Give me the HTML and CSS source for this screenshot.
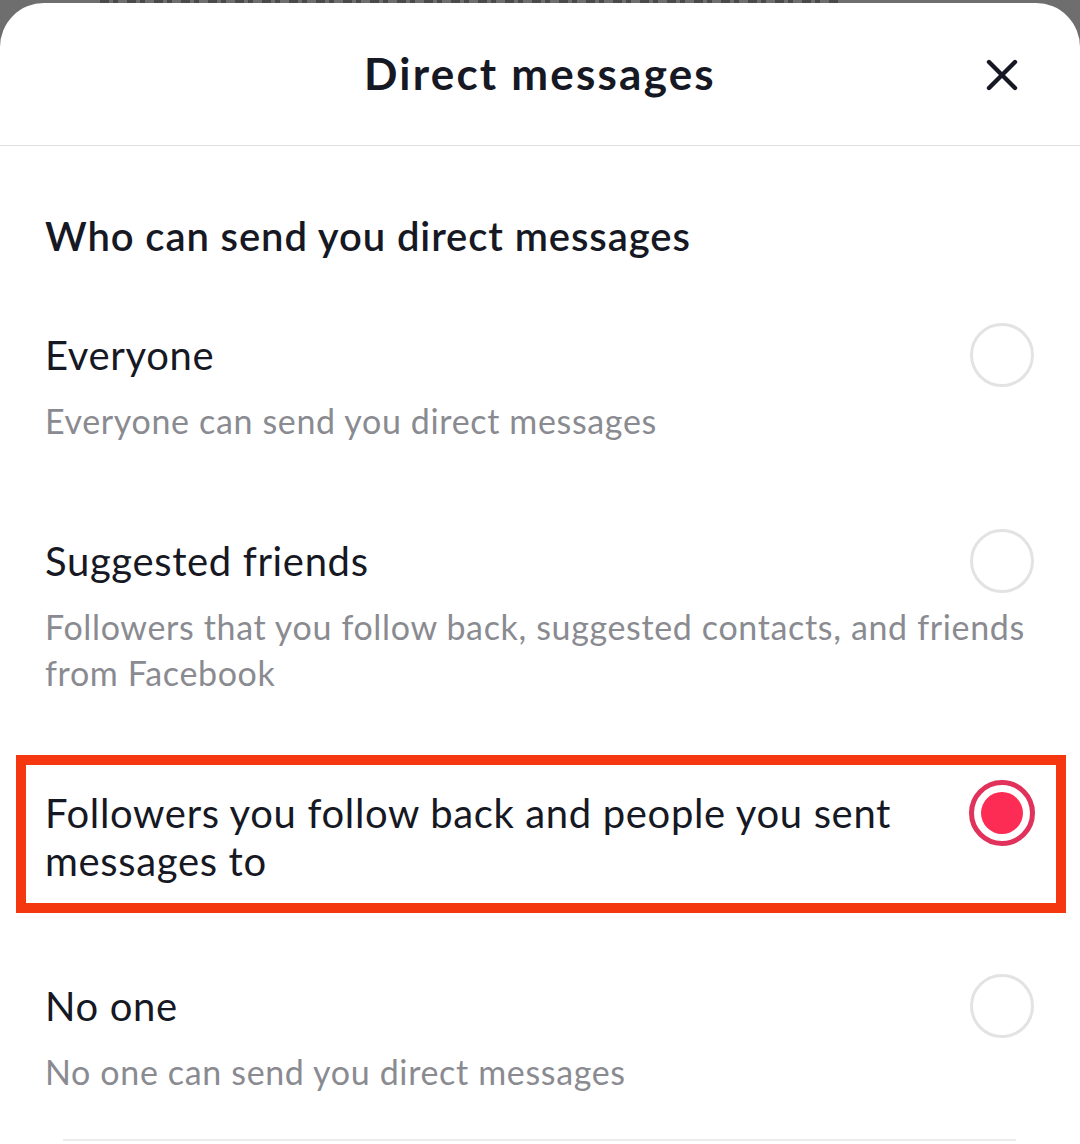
FILE: index.html
```html
<!DOCTYPE html>
<html lang="en">
<head>
<meta charset="utf-8">
<title>Direct messages</title>
<link rel="stylesheet" href="styles.css">
</head>
<body>
<div class="backdrop-peek" aria-hidden="true"></div>
<main class="sheet">
  <header class="sheet-header">
    <div class="header-spacer"></div>
    <h1 class="sheet-title">Direct messages</h1>
    <div class="header-actions">
      <button class="close-btn" aria-label="Close">
        <svg width="32" height="32" viewBox="0 0 32 32" aria-hidden="true">
          <path d="M3 3 L29 29 M29 3 L3 29" stroke="#161823" stroke-width="4.4" stroke-linecap="round" fill="none"/>
        </svg>
      </button>
    </div>
  </header>

  <section class="content">
    <h2 class="section-heading">Who can send you direct messages</h2>

    <ul class="options">
      <li class="option">
        <div class="option-title">Everyone</div>
        <span class="radio"></span>
        <div class="option-desc">Everyone can send you direct messages</div>
      </li>
      <li class="option">
        <div class="option-title">Suggested friends</div>
        <span class="radio"></span>
        <div class="option-desc">Followers that you follow back, suggested contacts, and friends from Facebook</div>
      </li>
      <li class="option option-highlighted">
        <div class="option-title option-title-wide">Followers you follow back and people you sent messages to</div>
        <span class="radio radio-selected"><span class="radio-dot"></span></span>
        <span class="highlight-box" aria-hidden="true"></span>
      </li>
      <li class="option option-last">
        <div class="option-title">No one</div>
        <span class="radio"></span>
        <div class="option-desc">No one can send you direct messages</div>
      </li>
    </ul>
    <div class="bottom-divider"></div>
  </section>
</main>
</body>
</html>
```

FILE: styles.css
```css
* {
  box-sizing: border-box;
}

html, body {
  margin: 0;
  padding: 0;
}

body {
  background: #6e6e6e;
  font-family: "Lato", "Liberation Sans", sans-serif;
  color: #161823;
  width: 1080px;
  height: 1144px;
  overflow: hidden;
}

.backdrop-peek {
  height: 3px;
  margin: 0 240px 0 100px;
  background: repeating-linear-gradient(90deg, #3a3a3a 0 9px, #6e6e6e 9px 13px, #3a3a3a 13px 18px, #6e6e6e 18px 27px);
  opacity: 0.7;
}

.sheet {
  background: #ffffff;
  border-radius: 44px 44px 0 0;
  height: 1141px;
  overflow: hidden;
}

.sheet-header {
  display: grid;
  grid-template-columns: 1fr auto 1fr;
  align-items: center;
  height: 143px;
  border-bottom: 1.5px solid #e1e1e3;
  padding-bottom: 2px;
}

.sheet-title {
  margin: 0;
  font-size: 44px;
  line-height: 52px;
  font-weight: 700;
  letter-spacing: 2.2px;
  color: #161823;
}

.header-actions {
  display: flex;
  justify-content: flex-end;
  padding-right: 46px;
}

.close-btn {
  width: 64px;
  height: 64px;
  margin-top: 4px;
  border: 0;
  background: transparent;
  padding: 0;
  display: flex;
  align-items: center;
  justify-content: center;
}

.content {
  padding: 0 46px 0 45px;
}

.section-heading {
  margin: 66px 0 0 0;
  font-size: 40px;
  line-height: 48px;
  font-weight: 600;
  letter-spacing: 0.9px;
  color: #161823;
}

.options {
  list-style: none;
  margin: 71px 0 0 0;
  padding: 0;
  display: flex;
  flex-direction: column;
  gap: 93px;
}

.option {
  position: relative;
  display: grid;
  grid-template-columns: 1fr auto;
  column-gap: 30px;
  align-items: start;
}

.option-last {
  margin-top: 4px;
}

.option-title {
  font-size: 40px;
  line-height: 48px;
  font-weight: 400;
  letter-spacing: 0.65px;
  color: #161823;
}

.option-title-wide {
  padding-right: 40px;
}

.option-desc {
  grid-column: 1 / -1;
  margin-top: 19px;
  font-size: 34px;
  line-height: 46px;
  letter-spacing: 0.65px;
  color: #8a8b91;
}

.radio {
  width: 64px;
  height: 64px;
  margin: -8px 0;
  border-radius: 50%;
  border: 3px solid #e3e3e4;
  display: flex;
  align-items: center;
  justify-content: center;
}

.radio-selected {
  width: 66px;
  height: 66px;
  margin: -9px -1px -9px 0;
  border: 5px solid #e0325a;
}

.radio-dot {
  width: 42px;
  height: 42px;
  border-radius: 50%;
  background: #fd2c55;
}

.highlight-box {
  position: absolute;
  top: -34px;
  left: -29px;
  right: -32px;
  bottom: -28px;
  border: 10px solid #f4370f;
  pointer-events: none;
}

.bottom-divider {
  margin: 44px 18px 0 18px;
  height: 2px;
  background: #ececee;
}
```
